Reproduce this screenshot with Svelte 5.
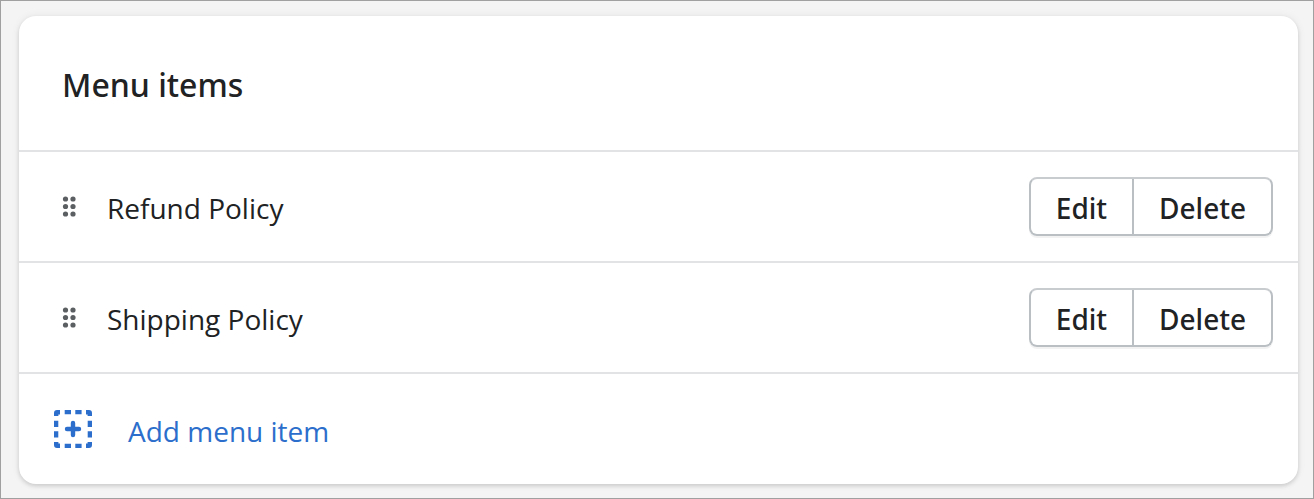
<script lang="ts">
  type MenuItem = { id: number; title: string };

  let items = $state<MenuItem[]>([
    { id: 1, title: "Refund Policy" },
    { id: 2, title: "Shipping Policy" },
  ]);

  function remove(id: number): void {
    items = items.filter((item) => item.id !== id);
  }

  function add(): void {
    const id = Math.max(0, ...items.map((item) => item.id)) + 1;
    items.push({ id, title: "New item" });
  }
</script>

<main class="page">
  <section class="card" aria-labelledby="menu-heading">
    <header class="card-header">
      <h2 id="menu-heading">Menu items</h2>
    </header>

    <ul class="items">
      {#each items as item (item.id)}
        <li class="item">
          <button class="handle" type="button" aria-label={`Reorder ${item.title}`}>
            <svg width="14" height="22" viewBox="0 0 14 22" aria-hidden="true">
              {#each [3, 10.5, 18] as cy}
                <circle cx="3.5" {cy} r="2.6" />
                <circle cx="11" {cy} r="2.6" />
              {/each}
            </svg>
          </button>
          <span class="title">{item.title}</span>
          <div class="actions">
            <button type="button">Edit</button>
            <button type="button" onclick={() => remove(item.id)}>Delete</button>
          </div>
        </li>
      {/each}
    </ul>

    <button class="add" type="button" onclick={add}>
      <svg width="38" height="38" viewBox="0 0 38 38" aria-hidden="true">
        <path d="M0 6V3a3 3 0 0 1 3-3h3v4.4H4.4V6z" />
        <path d="M32 0h3a3 3 0 0 1 3 3v3h-4.4V4.4H32z" />
        <path d="M38 32v3a3 3 0 0 1-3 3h-3v-4.4h1.6V32z" />
        <path d="M6 38H3a3 3 0 0 1-3-3v-3h4.4v1.6H6z" />
        <path d="M10.7 0H17v4.3h-6.3zM21.3 0h6.3v4.3h-6.3z" />
        <path d="M10.7 33.7H17V38h-6.3zM21.3 33.7h6.3V38h-6.3z" />
        <path d="M0 10.7h4.3V17H0zM0 21.3h4.3v6.3H0z" />
        <path d="M33.7 10.7H38V17h-4.3zM33.7 21.3H38v6.3h-4.3z" />
        <path class="plus" d="M19 13v12M13 19h12" />
      </svg>
      <span>Add menu item</span>
    </button>
  </section>
</main>

<style>
  :global(body) {
    background: #f4f4f4;
  }

  .page {
    box-sizing: border-box;
    min-height: 100vh;
    padding: 15px 15px 14px 18px;
    border: 1px solid #a0a0a0;
    color: #202223;
    font-family: "Segoe UI", "Open Sans", "Noto Sans", sans-serif;
    font-size: 28px;
    line-height: 38px;
  }

  .card {
    overflow: hidden;
    border-radius: 17px;
    background: #fff;
    box-shadow:
      0 0 10px rgba(23, 24, 24, 0.06),
      0 2px 4px rgba(0, 0, 0, 0.14);
  }

  .card-header {
    padding: 47px 43px 43px;
    border-bottom: 2px solid #e1e3e5;
  }

  h2 {
    margin: 0;
    font-family: "Segoe UI", "Noto Sans", sans-serif;
    font-size: 32px;
    font-weight: 500;
    line-height: 44px;
  }

  .items {
    margin: 0;
    padding: 0;
    list-style: none;
  }

  .item {
    display: flex;
    align-items: center;
    padding: 25px 25px 25px 43px;
    border-bottom: 2px solid #e1e3e5;
  }

  button {
    margin: 0;
    border: 0;
    background: none;
    color: inherit;
    font: inherit;
    cursor: pointer;
  }

  .handle {
    display: flex;
    padding: 0;
    fill: #5c5f62;
    cursor: grab;
  }

  .title {
    flex: 1;
    padding: 2px 0 0 31px;
  }

  .actions {
    display: flex;
    border: 2px solid #babfc3;
    border-top-color: #c9cccf;
    border-radius: 8px;
    box-shadow: 0 2px 0 rgba(0, 0, 0, 0.05);
  }

  .actions button {
    padding: 10px 25px 7px;
    font-family: "Segoe UI", "Noto Sans", sans-serif;
    font-weight: 500;
  }

  .actions button + button {
    border-left: 2px solid #babfc3;
  }

  .add {
    display: flex;
    align-items: center;
    gap: 36px;
    width: 100%;
    padding: 36px 35px;
    color: #2c6ecb;
    text-align: left;
  }

  .add svg {
    fill: currentColor;
  }

  .add span {
    padding-top: 2px;
    margin-bottom: -2px;
  }

  .add .plus {
    fill: none;
    stroke: currentColor;
    stroke-width: 4.4;
    stroke-linecap: round;
  }
</style>
